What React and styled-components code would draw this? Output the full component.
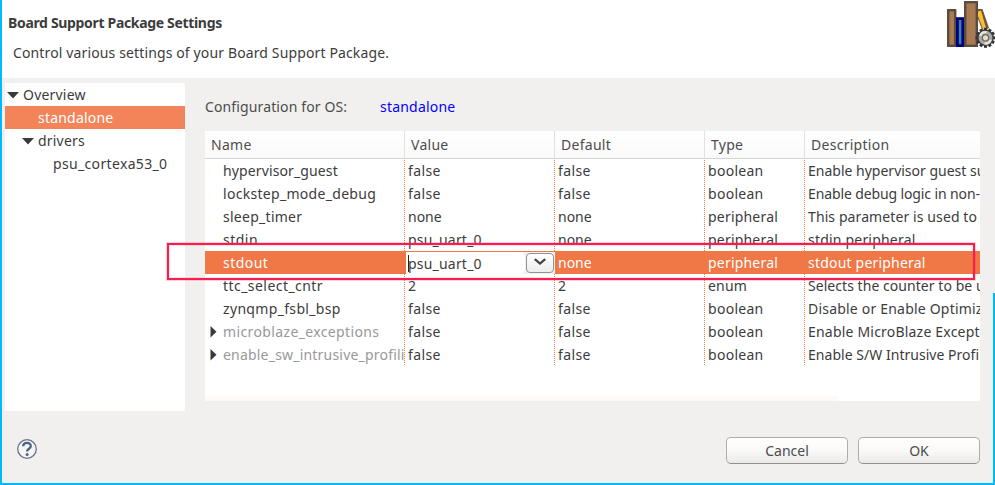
import React from "react";
import styled, { createGlobalStyle } from "styled-components";

const Global = createGlobalStyle`
  * { box-sizing: border-box; }
  body { margin: 0; background: #fff; overflow: hidden; }
`;

const Dialog = styled.main`
  position: relative;
  width: 995px;
  height: 485px;
  display: flex;
  flex-direction: column;
  background: #f1f0ee;
  border-left: 2px solid #00b9fb;
  border-bottom: 2px solid #00b9fb;
  font: 14px/23px "Noto Sans", "Open Sans", sans-serif;
  color: #3c3c3c;
  overflow: hidden;
`;

const Header = styled.header`
  height: 78px;
  flex: none;
  display: flex;
  justify-content: space-between;
  background: #fff;
  padding: 11px 0 0 6px;
`;

const Title = styled.h1`
  margin: 0;
  font-size: 14px;
  font-weight: 700;
  line-height: 23px;
`;

const Subtitle = styled.p`
  margin: 7px 0 0 5px;
`;

const BooksIcon = styled.svg`
  width: 50px;
  height: 50px;
  margin-top: -11px;
  flex: none;
`;

const Label = styled.span`
  white-space: pre;
  letter-spacing: ${(p) => p.$ls ?? 0.2}px;
`;

const Body = styled.div`
  flex: none;
  height: 333px;
  display: flex;
  padding: 5px 0 0 3px;
`;

const Tree = styled.nav`
  width: 180px;
  height: 328px;
  background: #fff;
`;

const TreeRow = styled.div`
  height: 23px;
  display: flex;
  align-items: center;
  padding-left: ${(p) => p.$indent}px;
  background: ${(p) => (p.$selected ? "#f38459" : "transparent")};
  color: ${(p) => (p.$selected ? "#fff" : "#3c3c3c")};
`;

const Arrow = styled.svg`
  flex: none;
  width: ${(p) => p.$w}px;
  height: 12px;
  margin-right: ${(p) => p.$gap}px;
  fill: #3a3a3a;
`;

const Content = styled.section`
  width: 775px;
  margin-left: 20px;
`;

const ConfigLine = styled.div`
  height: 48px;
  display: flex;
  padding-top: 12px;
  color: #4c4c4c;
`;

const ConfigCaption = styled.div`
  width: 175px;
`;

const OsName = styled.div`
  color: #0000ff;
`;

const Table = styled.div`
  height: 270px;
  display: flex;
  flex-direction: column;
  background: #fff;
`;

const Columns = styled.div`
  display: grid;
  grid-template-columns: 200px 150px 150px 100px 175px;
`;

const HeadRow = styled(Columns)`
  height: 28px;
  color: #4c4c4c;
  background: linear-gradient(#fff, #fafafa);
  border-bottom: 1px solid #d5d4d3;
`;

const HeadCell = styled.div`
  padding: 2px 0 0 6px;
  border-right: ${(p) => (p.$last ? 0 : 1)}px solid #e3e2e1;
`;

const dots = "repeating-linear-gradient(transparent 0 1px, #f07746 1px 2px)";

const Rows = styled.div`
  background-image: ${dots}, ${dots}, ${dots}, ${dots};
  background-size: 1px 100%;
  background-position: 199px 0, 349px 0, 499px 0, 599px 0;
  background-repeat: no-repeat;
`;

const Row = styled(Columns)`
  height: 23px;
  background: ${(p) => (p.$selected ? "#f07746" : "transparent")};
  color: ${(p) => (p.$selected ? "#fff" : "#3c3c3c")};
`;

const Cell = styled.div`
  height: 23px;
  display: flex;
  align-items: center;
  overflow: hidden;
  white-space: pre;
  padding-left: ${(p) => p.$pad}px;
  color: ${(p) => (p.$muted ? "#999" : "inherit")};
`;

const EditCell = styled.div`
  display: flex;
  height: 22px;
  margin: 1px 0 0 1px;
  background: #f1f0ee;
  color: #3c3c3c;
`;

const EditField = styled.div`
  width: 119px;
  height: 22px;
  display: flex;
  align-items: center;
  padding-left: 2px;
  background: #fff;
  border-radius: 0 5px 5px 0;
`;

const Caret = styled.i`
  width: 1px;
  height: 17px;
  background: #222;
  margin-right: -1px;
`;

const DropButton = styled.div`
  width: 28px;
  height: 20px;
  margin: 1px 0 0 1px;
  display: flex;
  align-items: flex-start;
  justify-content: center;
  padding-top: 4px;
  border: 1px solid #96938f;
  border-radius: 4px;
  background: linear-gradient(#fff, #ededed);
`;

const Scrollbar = styled.div`
  width: 632px;
  height: 5px;
  margin-top: auto;
  background: #fef9f6;
`;

const Footer = styled.footer`
  flex: 1;
  display: flex;
  align-items: flex-start;
  padding: 26px 15px 0 14px;
`;

const HelpIcon = styled.svg`
  width: 22px;
  height: 22px;
  margin-top: 1px;
  margin-right: auto;
`;

const Button = styled.button`
  width: 122px;
  height: 27px;
  margin-left: 10px;
  padding: 0 0 1px;
  font: inherit;
  line-height: 23px;
  color: #4c4c4c;
  border: 1px solid #b0aeab;
  border-bottom-color: #92908d;
  border-radius: 5px;
  background: linear-gradient(#fff, #f9f9f9 50%, #ebeae9);
`;

const Highlight = styled.div`
  position: absolute;
  left: 165px;
  top: 243px;
  width: 808px;
  height: 37px;
  border: 2px solid #fb1d4e;
  box-shadow: 0 0 0 1px rgba(251, 29, 78, 0.2), inset 0 0 0 1px rgba(251, 29, 78, 0.12);
`;

const RightEdge = styled.div`
  position: absolute;
  right: 0;
  top: 293px;
  bottom: 0;
  width: 2px;
  background: #00b9fb;
`;

const columns = ["Name", "Value", "Default", "Type", "Description"];

const rows = [
  ["hypervisor_guest", "false", "false", "boolean", "Enable hypervisor guest su"],
  ["lockstep_mode_debug", "false", "false", "boolean", "Enable debug logic in non-"],
  ["sleep_timer", "none", "none", "peripheral", "This parameter is used to"],
  ["stdin", "psu_uart_0", "none", "peripheral", "stdin peripheral"],
  ["stdout", "psu_uart_0", "none", "peripheral", "stdout peripheral"],
  ["ttc_select_cntr", "2", "2", "enum", "Selects the counter to be u"],
  ["zynqmp_fsbl_bsp", "false", "false", "boolean", "Disable or Enable Optimiz"],
  ["microblaze_exceptions", "false", "false", "boolean", "Enable MicroBlaze Except"],
  ["enable_sw_intrusive_profili", "false", "false", "boolean", "Enable S/W Intrusive Profi"],
];

const tracking = {
  hypervisor_guest: 0.12,
  lockstep_mode_debug: 0.3,
  sleep_timer: 0.27,
  stdin: 0.5,
  stdout: 0.45,
  ttc_select_cntr: 0.45,
  zynqmp_fsbl_bsp: 0.33,
  microblaze_exceptions: 0.37,
  enable_sw_intrusive_profili: 0.2,
  false: 0.4,
  none: 0,
  boolean: 0.28,
  "Enable hypervisor guest su": 0,
  "Enable debug logic in non-": -0.12,
  "This parameter is used to": 0.1,
  "Selects the counter to be u": 0.05,
  "Enable S/W Intrusive Profi": 0.03,
};

const Text = ({ children }) => <Label $ls={tracking[children]}>{children}</Label>;

const Down = () => (
  <Arrow $w={12} $gap={4} viewBox="0 0 12 12"><path d="M0 3h12L6 9.500z" /></Arrow>
);

const Right = () => (
  <Arrow $w={7} $gap={6} viewBox="0 0 7 12"><path d="M0.500 0l6 5.700L0.500 11.500z" /></Arrow>
);

function Editor({ value }) {
  return (
    <EditCell>
      <EditField><Caret /><Text>{value}</Text></EditField>
      <DropButton>
        <svg width="14" height="8" viewBox="0 0 14 8">
          <path d="M1.800 1.200L7 5.600l5.200-4.400" fill="none" stroke="#444" strokeWidth="2.200" />
        </svg>
      </DropButton>
    </EditCell>
  );
}

function SettingRow({ data, selected, group }) {
  const [name, value, def, type, description] = data;
  return (
    <Row $selected={selected}>
      <Cell $pad={group ? 5 : 18} $muted={group}>
        {group && <Right />}
        <Text>{name}</Text>
      </Cell>
      {selected ? <Editor value={value} /> : <Cell $pad={3}><Text>{value}</Text></Cell>}
      <Cell $pad={3}><Text>{def}</Text></Cell>
      <Cell $pad={3}><Text>{type}</Text></Cell>
      <Cell $pad={3}><Text>{description}</Text></Cell>
    </Row>
  );
}

const teeth = Array.from({ length: 12 }, (_, i) => i * 30);

function Books() {
  return (
    <BooksIcon viewBox="0 0 50 50">
      <path d="M33 9h4.500l6.500 19-6 3-5-13z" fill="#6e5544" />
      <path d="M33 11.500l3-1L41 28l-3 2-5-13z" fill="#fbc02d" />
      <path d="M33 17l4.500 12" stroke="#8b6a4b" strokeWidth="1.200" />
      <rect x="3.200" y="10.200" width="7" height="35.600" fill="#a87b50" stroke="#5b4c42" strokeWidth="2.400" />
      <rect x="12.400" y="18.600" width="5.400" height="27" fill="#3f81a0" stroke="#000080" strokeWidth="2.800" />
      <rect x="20.200" y="2.200" width="11.600" height="43.600" fill="#a87b50" stroke="#5b4c42" strokeWidth="2.400" />
      <g transform="translate(40.500 37.800)">
        {teeth.map((a) => (
          <rect key={a} x="-1.500" y="-10" width="3" height="4" fill="#333" transform={`rotate(${a})`} />
        ))}
        <circle r="7.600" fill="#a9a9a9" stroke="#3a3a3a" strokeWidth="1.300" />
        <path d="M-5.200 -2A5.500 5.500 0 0 1 1 -5.500M5.200 2A5.500 5.500 0 0 1 -1 5.500" fill="none" stroke="#e4e4e4" strokeWidth="2.400" />
        <circle r="3.200" fill="#edd9bc" stroke="#666" strokeWidth="1.200" />
      </g>
    </BooksIcon>
  );
}

export default function App() {
  return (
    <>
      <Global />
      <Dialog>
        <Header>
          <div>
            <Title><Label $ls={-0.33}>Board Support Package Settings</Label></Title>
            <Subtitle><Label $ls={0.13}>Control various settings of your Board Support Package.</Label></Subtitle>
          </div>
          <Books />
        </Header>
        <Body>
          <Tree>
            <TreeRow $indent={2}><Down /><Label>Overview</Label></TreeRow>
            <TreeRow $indent={33} $selected><Label>standalone</Label></TreeRow>
            <TreeRow $indent={17}><Down /><Label>drivers</Label></TreeRow>
            <TreeRow $indent={48}><Label $ls={0.34}>psu_cortexa53_0</Label></TreeRow>
          </Tree>
          <Content>
            <ConfigLine>
              <ConfigCaption><Label $ls={0.13}>Configuration for OS:</Label></ConfigCaption>
              <OsName><Label>standalone</Label></OsName>
            </ConfigLine>
            <Table>
              <HeadRow>
                {columns.map((c, i) => (
                  <HeadCell key={c} $last={i === columns.length - 1}><Label $ls={0.28}>{c}</Label></HeadCell>
                ))}
              </HeadRow>
              <Rows>
                {rows.map((r, i) => (
                  <SettingRow key={r[0]} data={r} selected={i === 4} group={i > 6} />
                ))}
              </Rows>
              <Scrollbar />
            </Table>
          </Content>
        </Body>
        <Footer>
          <HelpIcon viewBox="0 0 22 22">
            <circle cx="11" cy="11" r="9.300" fill="#f5f5f5" stroke="#64748f" strokeWidth="1.300" />
            <path d="M7.200 8.200C7.200 3.800 14.800 3.900 14.800 7.900c0 2.900-3.700 2.700-3.700 5.600" fill="none" stroke="#50627f" strokeWidth="2.300" />
            <circle cx="11.100" cy="16.500" r="1.500" fill="#50627f" />
          </HelpIcon>
          <Button><Label $ls={0}>Cancel</Label></Button>
          <Button><Label $ls={0}>OK</Label></Button>
        </Footer>
        <Highlight />
        <RightEdge />
      </Dialog>
    </>
  );
}
